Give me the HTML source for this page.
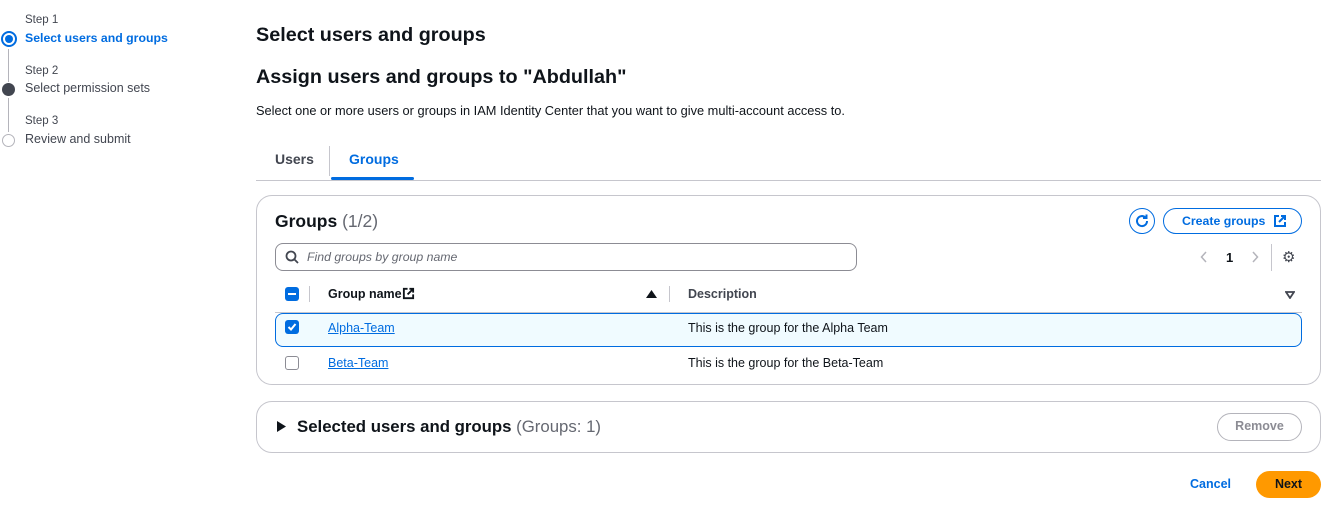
<!DOCTYPE html><html><head><style>
*{box-sizing:border-box;margin:0;padding:0}
body{width:1343px;height:525px;background:#fff;font-family:"Liberation Sans",sans-serif;color:#0f141a;position:relative;overflow:hidden;font-size:13px}
.a{position:absolute;white-space:nowrap}
.blue{color:#006ce0}
.panel{position:absolute;left:256px;width:1065px;border:1px solid #c6c6cd;border-radius:16px;background:#fff}
.cb{position:absolute;width:14px;height:14px;border-radius:3px}
a{color:#006ce0;text-decoration:underline}
</style></head><body>
<div class="a" style="left:25px;top:14px;font-size:11.5px;color:#424650">Step 1</div>
<div class="a blue" style="left:25px;top:31px;font-weight:bold;font-size:12.3px">Select users and groups</div>
<div class="a" style="left:1px;top:31px;width:16px;height:16px;border:2px solid #006ce0;border-radius:50%"></div>
<div class="a" style="left:5px;top:35px;width:8px;height:8px;background:#006ce0;border-radius:50%"></div>
<div class="a" style="left:8px;top:49px;width:1px;height:33px;background:#b4b4bb"></div>
<div class="a" style="left:25px;top:65px;font-size:11.5px;color:#424650">Step 2</div>
<div class="a" style="left:25px;top:81px;color:#424650;font-size:12.5px">Select permission sets</div>
<div class="a" style="left:2px;top:83px;width:13px;height:13px;background:#424650;border-radius:50%"></div>
<div class="a" style="left:8px;top:98px;width:1px;height:34px;background:#b4b4bb"></div>
<div class="a" style="left:25px;top:115px;font-size:11.5px;color:#424650">Step 3</div>
<div class="a" style="left:25px;top:132px;color:#424650;font-size:12.5px">Review and submit</div>
<div class="a" style="left:2px;top:134px;width:13px;height:13px;border:1.5px solid #b4b4bb;border-radius:50%"></div>

<div class="a" style="left:256px;top:24px;font-size:19.8px;font-weight:bold">Select users and groups</div>
<div class="a" style="left:256px;top:66px;font-size:19.8px;font-weight:bold">Assign users and groups to "Abdullah"</div>
<div class="a" style="left:256px;top:103px;font-size:12.8px">Select one or more users or groups in IAM Identity Center that you want to give multi-account access to.</div>
<div class="a" style="left:275px;top:151px;font-size:14px;font-weight:bold;color:#424650">Users</div>
<div class="a" style="left:329px;top:146px;width:1px;height:30px;background:#c6c6cd"></div>
<div class="a blue" style="left:349px;top:151px;font-size:14px;font-weight:bold">Groups</div>
<div class="a" style="left:256px;top:180px;width:1065px;height:1px;background:#c6c6cd"></div>
<div class="a" style="left:331px;top:177px;width:83px;height:3px;background:#006ce0;border-radius:2px"></div>

<div class="panel" style="top:195px;height:190px"></div>
<div class="a" style="left:275px;top:211px;font-size:17.5px;font-weight:bold">Groups <span style="font-weight:normal;color:#656871">(1/2)</span></div>
<div class="a" style="left:1129px;top:208px;width:26px;height:26px;border:1.5px solid #006ce0;border-radius:50%"></div>
<svg class="a" style="left:1134px;top:213px" width="16" height="16" viewBox="0 0 16 16"><path d="M13 8a5 5 0 1 1-1.5-3.5" fill="none" stroke="#006ce0" stroke-width="2"/><path d="M12.5 1.5v3.5H9" fill="none" stroke="#006ce0" stroke-width="2"/></svg>
<div class="a" style="left:1163px;top:208px;width:139px;height:26px;border:1.5px solid #006ce0;border-radius:14px"></div>
<div class="a blue" style="left:1182px;top:214px;font-weight:bold;font-size:12.3px">Create groups</div>
<svg class="a" style="left:1273px;top:214px" width="14" height="14" viewBox="0 0 14 14"><path d="M6 2H2v10h10V8M8 2h4v4M12 2 6 8" fill="none" stroke="#006ce0" stroke-width="2"/></svg>
<div class="a" style="left:275px;top:243px;width:582px;height:28px;border:1px solid #8c8c94;border-radius:8px"></div>
<svg class="a" style="left:285px;top:250px" width="14" height="14" viewBox="0 0 14 14"><circle cx="6" cy="6" r="4.5" fill="none" stroke="#424650" stroke-width="1.8"/><path d="M9.5 9.5 13 13" stroke="#424650" stroke-width="1.8"/></svg>
<div class="a" style="left:307px;top:250px;font-style:italic;color:#656871;font-size:12.3px">Find groups by group name</div>
<svg class="a" style="left:1200px;top:251px" width="8" height="12" viewBox="0 0 8 12"><path d="M6 1 1.5 6 6 11" fill="none" stroke="#b4b4bb" stroke-width="1.5"/></svg>
<div class="a" style="left:1226px;top:250px;font-weight:bold">1</div>
<svg class="a" style="left:1251px;top:251px" width="8" height="12" viewBox="0 0 8 12"><path d="M2 1 6.5 6 2 11" fill="none" stroke="#b4b4bb" stroke-width="1.5"/></svg>
<div class="a" style="left:1271px;top:244px;width:1px;height:27px;background:#c6c6cd"></div>
<div class="a" style="left:1282px;top:248px;font-size:15px;color:#424650">⚙</div>

<div class="cb" style="left:285px;top:287px;background:#006ce0"></div>
<div class="a" style="left:288px;top:293px;width:8px;height:2px;background:#fff"></div>
<div class="a" style="left:309px;top:286px;width:1px;height:16px;background:#c6c6cd"></div>
<div class="a" style="left:328px;top:287px;font-weight:bold;font-size:12.5px">Group name</div>
<svg class="a" style="left:402px;top:287px" width="13" height="13" viewBox="0 0 14 14"><path d="M6 2H2v10h10V8M8 2h4v4M12 2 6 8" fill="none" stroke="#0f141a" stroke-width="2"/></svg>
<svg class="a" style="left:646px;top:290px" width="11" height="9" viewBox="0 0 11 9"><path d="M5.5 0 11 8H0z" fill="#0f141a"/></svg>
<div class="a" style="left:669px;top:286px;width:1px;height:16px;background:#c6c6cd"></div>
<div class="a" style="left:688px;top:287px;font-weight:bold;color:#424650;font-size:12.5px">Description</div>
<svg class="a" style="left:1285px;top:291px" width="10" height="8" viewBox="0 0 10 8"><path d="M1 1h8L5 7z" fill="none" stroke="#424650" stroke-width="1.8"/></svg>
<div class="a" style="left:275px;top:312px;width:1027px;height:1px;background:#c6c6cd"></div>
<div class="a" style="left:275px;top:313px;width:1027px;height:34px;background:#f0fbff;border:1px solid #006ce0;border-radius:8px"></div>
<div class="cb" style="left:285px;top:320px;background:#006ce0"></div>
<svg class="a" style="left:287px;top:322px" width="10" height="10" viewBox="0 0 10 10"><path d="M1.5 5 4 7.5 8.5 2" fill="none" stroke="#fff" stroke-width="2"/></svg>
<div class="a" style="left:328px;top:321px;font-size:12.5px"><a>Alpha-Team</a></div>
<div class="a" style="left:688px;top:321px;font-size:12.5px">This is the group for the Alpha Team</div>
<div class="cb" style="left:285px;top:356px;border:1px solid #8c8c94"></div>
<div class="a" style="left:328px;top:356px;font-size:12.5px"><a>Beta-Team</a></div>
<div class="a" style="left:688px;top:356px;font-size:12.5px">This is the group for the Beta-Team</div>

<div class="panel" style="top:401px;height:52px"></div>
<svg class="a" style="left:277px;top:421px" width="9" height="11" viewBox="0 0 9 11"><path d="M0 0 9 5.5 0 11z" fill="#0f141a"/></svg>
<div class="a" style="left:297px;top:417px;font-size:16.8px;font-weight:bold">Selected users and groups <span style="font-weight:normal;color:#656871">(Groups: 1)</span></div>
<div class="a" style="left:1217px;top:413px;width:85px;height:28px;border:1.5px solid #b4b4bb;border-radius:14px;color:#8c8c94;font-weight:bold;text-align:center;line-height:25px;font-size:12.5px">Remove</div>

<div class="a blue" style="left:1190px;top:477px;font-weight:bold;font-size:12.5px">Cancel</div>
<div class="a" style="left:1256px;top:471px;width:65px;height:27px;background:#ff9900;border-radius:14px;font-weight:bold;text-align:center;line-height:27px;font-size:12.5px">Next</div>
</body></html>
